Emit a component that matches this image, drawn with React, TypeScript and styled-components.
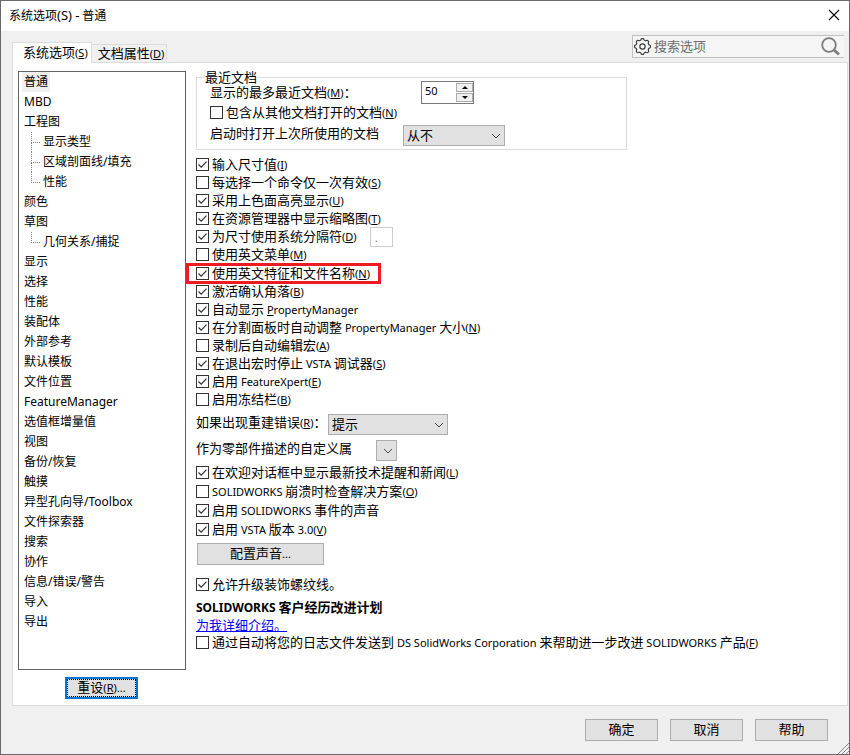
import React, { useId } from "react";
import styled, { createGlobalStyle, css } from "styled-components";

const Global = createGlobalStyle`
  *, *::before, *::after { box-sizing: border-box; }
  body { margin: 0; background: #f0f0f0; }
  body, button, input, select {
    font-family: "Noto Sans CJK SC", "Noto Sans", sans-serif;
    font-size: 13px;
    line-height: 18px;
    color: #000;
  }
  button, input, select { margin: 0; padding: 0; border-radius: 0; }
`;

/* ---------- text ---------- */

const Latin = styled.span<{ $size: number }>`
  font-family: "Noto Sans", "Noto Sans CJK SC", sans-serif;
  font-size: ${(p) => p.$size}px;
  line-height: 1;
`;

const Key = styled.span`
  text-decoration: underline;
  text-underline-offset: 1px;
`;

/* Sets Latin runs in their own face; "&" marks the access key that follows it. */
function Mixed({ children, latin = 11 }: { children: string; latin?: number }) {
  const runs = children.match(/[\x21-\x7e]+(?: [\x21-\x7e]+)*|[^\x21-\x7e]+/g) ?? [];
  return (
    <>
      {runs.map((run, i) => {
        if (!/[\x21-\x7e]/.test(run)) return <React.Fragment key={i}>{run}</React.Fragment>;
        const at = run.indexOf("&");
        return (
          <Latin key={i} $size={latin}>
            {at < 0 ? run : (
              <>
                {run.slice(0, at)}
                <Key>{run[at + 1]}</Key>
                {run.slice(at + 2)}
              </>
            )}
          </Latin>
        );
      })}
    </>
  );
}

/* ---------- window ---------- */

const Window = styled.main`
  position: relative;
  display: flex;
  flex-direction: column;
  min-height: 100vh;
  border: 1px solid #6b686b;
  background: #f0f0f0;
`;

const TitleBar = styled.header`
  display: flex;
  align-items: center;
  justify-content: space-between;
  height: 30px;
  padding: 0 9px 2px 8px;
  background: #fff;
`;

const Title = styled.h1`
  margin: 0;
  font-size: 12px;
  line-height: 18px;
  font-weight: 400;
`;

const CloseButton = styled.button`
  display: flex;
  border: 0;
  background: none;
`;

const TopRow = styled.div`
  display: flex;
  justify-content: space-between;
  align-items: flex-start;
  padding: 4px 5px 0 11px;
  height: 31px;
`;

const Tabs = styled.div`
  display: flex;
  align-items: flex-end;
  align-self: flex-end;
`;

const Tab = styled.button<{ $active?: boolean }>`
  position: relative;
  border: 1px solid #dcdcdc;
  border-bottom: 0;
  white-space: nowrap;
  ${(p) =>
    p.$active
      ? css`
          height: 21px;
          padding: 0 3px 5px 10px;
          background: #fff;
          z-index: 1;
          margin-bottom: -1px;
        `
      : css`
          height: 18px;
          padding: 0 2px 1px 6px;
          border-left: 0;
          background: #f0f0f0;
          line-height: 16px;
        `}
`;

const Search = styled.label`
  display: flex;
  align-items: center;
  width: 212px;
  height: 23px;
  padding: 0 4px 0 1px;
  gap: 3px;
  border: 1px solid #c0c0c0;
  border-right: 0;
  background: #f5f5f5;
`;

const SearchInput = styled.input`
  flex: 1;
  min-width: 0;
  padding-bottom: 2px;
  border: 0;
  outline: 0;
  background: none;
  &::placeholder { color: #6d6d6d; opacity: 1; }
`;

const Panel = styled.section`
  flex: 1;
  display: flex;
  gap: 10px;
  margin: 0 1px 0 11px;
  padding: 8px 5px 6px;
  border: 1px solid #dcdcdc;
  background: #fff;
`;

/* ---------- category list ---------- */

const Side = styled.nav`
  display: flex;
  flex-direction: column;
  align-items: center;
  gap: 7px;
  flex: 0 0 168px;
`;

const Tree = styled.ul`
  flex: 1;
  align-self: stretch;
  margin: 0;
  padding: 0 3px;
  border: 1px solid #646464;
  list-style: none;
  font-size: 12px;
  line-height: 20px;
`;

const TreeItem = styled.li<{ $child?: boolean; $last?: boolean }>`
  position: relative;
  display: flex;
  height: 20px;
  padding-left: ${(p) => (p.$child ? 19 : 0)}px;
  ${(p) =>
    p.$child &&
    css`
      &::before {
        content: "";
        position: absolute;
        left: 9px;
        top: 0;
        width: 9px;
        height: 11px;
        border-left: 1px dotted #808080;
        border-bottom: 1px dotted #808080;
      }
      ${!p.$last &&
      css`
        &::after {
          content: "";
          position: absolute;
          left: 9px;
          top: 11px;
          height: 9px;
          border-left: 1px dotted #808080;
        }
      `}
    `}
`;

const TreeLink = styled.a<{ $selected?: boolean }>`
  height: 20px;
  line-height: 18px;
  padding: 0 2px;
  color: #000;
  text-decoration: none;
  white-space: nowrap;
  background: ${(p) => (p.$selected ? "#f0f0f0" : "transparent")};
`;

/* ---------- controls ---------- */

const Button = styled.button<{ $width: number }>`
  width: ${(p) => p.$width}px;
  height: 22px;
  padding-bottom: 2px;
  border: 1px solid #adadad;
  background: #e1e1e1;
  line-height: 18px;
  white-space: nowrap;
`;

const DefaultButton = styled(Button)`
  border: 2px solid #0078d7;
  outline: 1px dotted #000;
  outline-offset: -3px;
  margin-left: -1px;
  line-height: 16px;
`;

const Row = styled.div<{ $top?: number }>`
  display: flex;
  align-items: flex-start;
  height: 18px;
  margin-top: ${(p) => p.$top ?? 0}px;
  white-space: nowrap;
`;

const MarkedRow = styled(Row)`
  position: relative;
  align-self: flex-start;
  padding-right: 11px;
  &::after {
    content: "";
    position: absolute;
    inset: -2px 0 -1px -10px;
    border: 3px solid #ed1c24;
    pointer-events: none;
  }
`;

const CheckLabel = styled.label`
  display: flex;
  align-items: flex-start;
  gap: 3px;
  height: 18px;
  line-height: 16px;
`;

const Box = styled.span`
  display: grid;
  margin-top: 2px;
  > * { grid-area: 1 / 1; }
  input {
    appearance: none;
    width: 13px;
    height: 13px;
    border: 1px solid #333;
    background: #fff;
  }
  svg { visibility: hidden; pointer-events: none; }
  input:checked + svg { visibility: visible; }
`;

const SeparatorCheck = styled.span`
  flex: 0 0 158px;
`;

const SeparatorInput = styled.input`
  width: 23px;
  height: 20px;
  margin: -1px 0 -1px 13px;
  padding: 0 4px;
  border: 1px solid #ccc;
  background: #fff;
  color: #6d6d6d;
  font-size: 11px;
`;

const Field = styled.div<{ $top?: number }>`
  display: flex;
  align-items: flex-start;
  height: 21px;
  margin-top: ${(p) => p.$top ?? 0}px;
  line-height: 18px;
  white-space: nowrap;
`;

const FieldLabel = styled.label<{ $width: number }>`
  flex: 0 0 ${(p) => p.$width}px;
  margin-top: -1px;
`;

const SelectBox = styled.span<{ $width: number }>`
  display: grid;
  align-items: center;
  justify-items: end;
  width: ${(p) => p.$width}px;
  height: 21px;
  > * { grid-area: 1 / 1; }
  select {
    appearance: none;
    width: 100%;
    height: 21px;
    padding: 0 0 2px 3px;
    border: 1px solid #adadad;
    background: #e1e1e1;
  }
  svg { pointer-events: none; margin-right: 4px; }
`;

const Group = styled.fieldset`
  min-width: 0;
  max-width: 431px;
  margin: 2px 0 6px;
  padding: 0 0 3px 13px;
  border: 1px solid #dcdcdc;
`;

const Legend = styled.legend`
  margin-left: -6px;
  padding: 0 1px 1px;
  line-height: 7px;
`;

const SpinRow = styled.div`
  display: flex;
  align-items: flex-start;
  height: 23px;
`;

const SpinLabel = styled.label`
  flex: 0 0 211px;
  padding-top: 2px;
`;

const Spinner = styled.span`
  display: flex;
  width: 53px;
  height: 23px;
  border: 1px solid #7a7a7a;
  background: #fff;
  input {
    flex: 1;
    min-width: 0;
    padding: 0 0 3px 3px;
    border: 0;
    outline: 0;
    background: none;
    font-family: "Noto Sans", sans-serif;
    font-size: 11px;
  }
`;

const SpinButtons = styled.span`
  display: flex;
  flex-direction: column;
  gap: 1px;
  width: 17px;
  padding: 1px 0;
  button {
    flex: 1;
    display: flex;
    align-items: center;
    justify-content: center;
    border: 1px solid #adadad;
    background: #f0f0f0;
  }
`;

const Content = styled.div`
  flex: 1;
  display: flex;
  flex-direction: column;
  min-width: 0;
`;

const Stack = styled.div<{ $top?: number; $gap?: number }>`
  display: flex;
  flex-direction: column;
  gap: ${(p) => p.$gap ?? 0}px;
  margin-top: ${(p) => p.$top ?? 0}px;
`;

const SoundRow = styled.div`
  margin: 4px 0 11px 1px;
  display: flex;
`;

const Heading = styled.h2`
  margin: 4px 0 0;
  font-size: 13px;
  line-height: 18px;
  height: 18px;
  font-weight: 700;
`;

const Link = styled.a`
  align-self: flex-start;
  height: 18px;
  color: #00f;
  text-decoration: underline;
`;

const Footer = styled.footer`
  display: flex;
  justify-content: flex-end;
  gap: 12px;
  padding: 13px 21px;
`;

const Grip = styled.svg`
  position: absolute;
  right: 0;
  bottom: 0;
`;

/* ---------- drawings ---------- */

const Chevron = () => (
  <svg width="10" height="6" viewBox="0 0 10 6" fill="none" stroke="#444">
    <path d="M1 1l4 4 4-4" />
  </svg>
);

const Triangle = ({ up }: { up?: boolean }) => (
  <svg width="6" height="3" viewBox="0 0 6 3">
    <path d={up ? "M0 3L3 0L6 3Z" : "M0 0L3 3L6 0Z"} />
  </svg>
);

const gearPath = (() => {
  const pts: string[] = [];
  for (let i = 0; i <= 96; i++) {
    const a = (i / 96) * Math.PI * 2;
    const wave = Math.cos(a * 8);
    const r = 6.8 + 0.7 * Math.tanh(wave * 2.2);
    pts.push(`${(8 + r * Math.cos(a)).toFixed(2)} ${(8 + r * Math.sin(a)).toFixed(2)}`);
  }
  return `M${pts.join("L")}Z`;
})();

const Gear = () => (
  <svg width="17" height="17" viewBox="0 0 16 16" fill="none" stroke="#3a3a3a">
    <path d={gearPath} strokeWidth="1.1" />
    <circle cx="8" cy="8" r="2.5" strokeWidth="1.1" />
  </svg>
);

const Magnifier = () => (
  <svg width="20" height="20" viewBox="0 0 20 20" fill="none" stroke="#7d7d7d">
    <circle cx="9" cy="8" r="6.8" strokeWidth="1.8" />
    <path d="M14 13l5 4.5" strokeWidth="2.8" />
  </svg>
);

/* ---------- composed parts ---------- */

function Check({ text, on }: { text: string; on?: boolean }) {
  return (
    <CheckLabel>
      <Box>
        <input type="checkbox" defaultChecked={on} />
        <svg width="13" height="13" viewBox="0 0 13 13" fill="none" stroke="#333" strokeWidth="1.2">
          <path d="M2.5 6.5l2.7 2.7 5.3-5.6" />
        </svg>
      </Box>
      <span><Mixed>{text}</Mixed></span>
    </CheckLabel>
  );
}

function Choice({ label, value, labelWidth, width, top }: {
  label: string; value: string; labelWidth: number; width: number; top: number;
}) {
  const id = useId();
  return (
    <Field $top={top}>
      <FieldLabel htmlFor={id} $width={labelWidth}><Mixed>{label}</Mixed></FieldLabel>
      <SelectBox $width={width}>
        <select id={id} defaultValue={value}>
          <option value={value}>{value}</option>
        </select>
        <Chevron />
      </SelectBox>
    </Field>
  );
}

type Node = { name: string; child?: boolean; last?: boolean };

const categories: Node[] = [
  { name: "普通" },
  { name: "MBD" },
  { name: "工程图" },
  { name: "显示类型", child: true },
  { name: "区域剖面线/填充", child: true },
  { name: "性能", child: true, last: true },
  { name: "颜色" },
  { name: "草图" },
  { name: "几何关系/捕捉", child: true, last: true },
  { name: "显示" },
  { name: "选择" },
  { name: "性能" },
  { name: "装配体" },
  { name: "外部参考" },
  { name: "默认模板" },
  { name: "文件位置" },
  { name: "FeatureManager" },
  { name: "选值框增量值" },
  { name: "视图" },
  { name: "备份/恢复" },
  { name: "触摸" },
  { name: "异型孔向导/Toolbox" },
  { name: "文件探索器" },
  { name: "搜索" },
  { name: "协作" },
  { name: "信息/错误/警告" },
  { name: "导入" },
  { name: "导出" },
];

export default function App() {
  return (
    <>
      <Global />
      <Window>
        <TitleBar>
          <Title><Mixed latin={13}>系统选项(S) - 普通</Mixed></Title>
          <CloseButton type="button" aria-label="关闭">
            <svg width="12" height="12" viewBox="0 0 12 12" stroke="#000" strokeWidth="1.1">
              <path d="M1 1l10 10M11 1L1 11" />
            </svg>
          </CloseButton>
        </TitleBar>

        <TopRow>
          <Tabs role="tablist">
            <Tab type="button" role="tab" aria-selected="true" $active><Mixed>系统选项(&S)</Mixed></Tab>
            <Tab type="button" role="tab" aria-selected="false"><Mixed>文档属性(&D)</Mixed></Tab>
          </Tabs>
          <Search>
            <Gear />
            <SearchInput type="text" placeholder="搜索选项" aria-label="搜索选项" />
            <Magnifier />
          </Search>
        </TopRow>

        <Panel>
          <Side>
            <Tree>
              {categories.map((c, i) => (
                <TreeItem key={i} $child={c.child} $last={c.last}>
                  <TreeLink href="#" $selected={i === 0}><Mixed latin={12}>{c.name}</Mixed></TreeLink>
                </TreeItem>
              ))}
            </Tree>
            <DefaultButton type="button" $width={73}><Mixed>重设(&R)...</Mixed></DefaultButton>
          </Side>

          <Content>
            <Group>
              <Legend>最近文档</Legend>
              <SpinRow>
                <SpinLabel htmlFor="recent"><Mixed>显示的最多最近文档(&M)：</Mixed></SpinLabel>
                <Spinner>
                  <input id="recent" type="text" defaultValue="50" />
                  <SpinButtons>
                    <button type="button" aria-label="增加"><Triangle up /></button>
                    <button type="button" aria-label="减少"><Triangle /></button>
                  </SpinButtons>
                </Spinner>
              </SpinRow>
              <Row><Check text="包含从其他文档打开的文档(&N)" /></Row>
              <Choice label="启动时打开上次所使用的文档" value="从不" labelWidth={193} width={102} top={3} />
            </Group>

            <Row><Check on text="输入尺寸值(&I)" /></Row>
            <Row><Check text="每选择一个命令仅一次有效(&S)" /></Row>
            <Row><Check on text="采用上色面高亮显示(&U)" /></Row>
            <Row><Check on text="在资源管理器中显示缩略图(&T)" /></Row>
            <Row>
              <SeparatorCheck><Check on text="为尺寸使用系统分隔符(&D)" /></SeparatorCheck>
              <SeparatorInput type="text" defaultValue="." aria-label="分隔符" disabled />
            </Row>
            <Row><Check text="使用英文菜单(&M)" /></Row>
            <MarkedRow $top={1}><Check on text="使用英文特征和文件名称(&N)" /></MarkedRow>
            <Row><Check on text="激活确认角落(&B)" /></Row>
            <Row><Check on text="自动显示 &PropertyManager" /></Row>
            <Row><Check on text="在分割面板时自动调整 PropertyManager 大小(&N)" /></Row>
            <Row><Check text="录制后自动编辑宏(&A)" /></Row>
            <Row><Check on text="在退出宏时停止 VSTA 调试器(&S)" /></Row>
            <Row><Check on text="启用 FeatureXpert(&E)" /></Row>
            <Row><Check text="启用冻结栏(&B)" /></Row>

            <Choice label="如果出现重建错误(&R)：" value="提示" labelWidth={132} width={120} top={5} />
            <Choice label="作为零部件描述的自定义属" value="" labelWidth={180} width={21} top={5} />

            <Stack $top={3} $gap={1}>
              <Row><Check on text="在欢迎对话框中显示最新技术提醒和新闻(&L)" /></Row>
              <Row><Check text="SOLIDWORKS 崩溃时检查解决方案(&O)" /></Row>
              <Row><Check on text="启用 SOLIDWORKS 事件的声音" /></Row>
              <Row><Check on text="启用 VSTA 版本 3.0(&V)" /></Row>
            </Stack>

            <SoundRow><Button type="button" $width={127}><Mixed>配置声音...</Mixed></Button></SoundRow>

            <Row><Check on text="允许升级装饰螺纹线。" /></Row>
            <Heading><Mixed latin={12}>SOLIDWORKS 客户经历改进计划</Mixed></Heading>
            <Link href="#">为我详细介绍。</Link>
            <Row>
              <Check text="通过自动将您的日志文件发送到 DS SolidWorks Corporation 来帮助进一步改进 SOLIDWORKS 产品(&F)" />
            </Row>
          </Content>
        </Panel>

        <Footer>
          <Button type="button" $width={73}>确定</Button>
          <Button type="button" $width={73}>取消</Button>
          <Button type="button" $width={73}>帮助</Button>
        </Footer>

        <Grip width="12" height="12" viewBox="0 0 12 12" stroke="#8a8a8a" fill="none">
          <path d="M1 12L12 1M5 12L12 5M9 12L12 9" />
        </Grip>
      </Window>
    </>
  );
}
